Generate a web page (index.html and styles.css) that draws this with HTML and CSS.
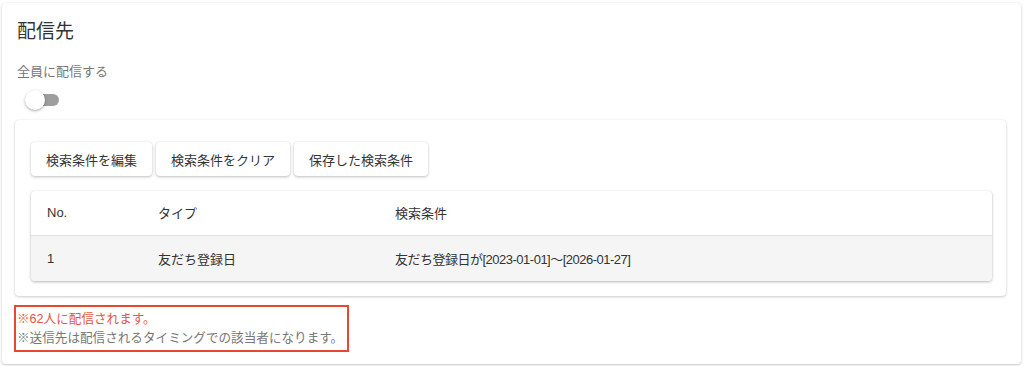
FILE: index.html
```html
<!DOCTYPE html>
<html lang="ja">
<head>
<meta charset="utf-8">
<link rel="stylesheet" href="styles.css">
</head>
<body>
<div class="card">
  <h2 class="title">配信先</h2>
  <div class="label">全員に配信する</div>
  <div class="switch"><span class="track"></span><span class="thumb"></span></div>
  <div class="inner">
    <div class="buttons">
      <button class="btn">検索条件を編集</button>
      <button class="btn">検索条件をクリア</button>
      <button class="btn">保存した検索条件</button>
    </div>
    <div class="table-card">
      <table class="table">
        <thead>
          <tr><th class="c1">No.</th><th class="c2">タイプ</th><th>検索条件</th></tr>
        </thead>
        <tbody>
          <tr><td class="c1">1</td><td class="c2">友だち登録日</td><td class="cond">友だち登録日が[2023-01-01]〜[2026-01-27]</td></tr>
        </tbody>
      </table>
    </div>
  </div>
  <div class="notes">
    <div class="note red">※62人に配信されます。</div>
    <div class="note grey">※送信先は配信されるタイミングでの該当者になります。</div>
  </div>
</div>
</body>
</html>
```

FILE: styles.css
```css
* { box-sizing: border-box; }
html, body { margin: 0; padding: 0; background: #fff; }
body {
  font-family: "Liberation Sans", "Noto Sans CJK JP", sans-serif;
  color: #333;
  padding: 3px 3px 0 2px;
  height: 366px;
  overflow: hidden;
}
.card {
  background: #fff;
  border-radius: 4px;
  box-shadow: 0 1px 3px rgba(0,0,0,0.22), 0 0 1px rgba(0,0,0,0.08);
  height: 361px;
  padding: 15px 15px 0 13px;
}
.title {
  margin: 0;
  padding-left: 2px;
  font-size: 19px;
  font-weight: 400;
  line-height: 28px;
  color: #333;
}
.label {
  margin-top: 16px;
  padding-left: 2px;
  font-size: 13px;
  line-height: 20px;
  color: #777;
}
.switch {
  position: relative;
  margin: 8px 0 0 10px;
  width: 34px;
  height: 20px;
}
.track {
  position: absolute;
  left: 2px;
  top: 4px;
  width: 32px;
  height: 12px;
  border-radius: 6px;
  background: #9e9e9e;
}
.thumb {
  position: absolute;
  left: 0;
  top: 0;
  width: 20px;
  height: 20px;
  border-radius: 50%;
  background: #fff;
  box-shadow: 0 1px 3px rgba(0,0,0,0.35);
}
.inner {
  margin-top: 10px;
  border-radius: 4px;
  box-shadow: 0 1px 3px rgba(0,0,0,0.2), 0 0 1px rgba(0,0,0,0.1);
  padding: 22px 14px 15px 16px;
}
.buttons {
  display: flex;
  gap: 4px;
}
.btn {
  font-family: "Liberation Sans", "Noto Sans CJK JP", sans-serif;
  font-size: 13px;
  color: #333;
  background: #fff;
  border: none;
  border-radius: 4px;
  height: 34px;
  padding: 0 15px;
  box-shadow: 0 1px 3px rgba(0,0,0,0.25), 0 0 1px rgba(0,0,0,0.1);
}
.table-card {
  margin-top: 15px;
  border-radius: 4px;
  overflow: hidden;
  box-shadow: 0 1px 3px rgba(0,0,0,0.28), 0 0 1px rgba(0,0,0,0.1);
}
.table {
  width: 100%;
  border-collapse: collapse;
  font-size: 13px;
  color: #333;
}
.table th, .table td {
  text-align: left;
  font-weight: 400;
  padding: 0 16px;
}
.table th { height: 44px; border-bottom: 1px solid #e2e2e2; }
.table td { height: 46px; background: #f5f5f5; }
.cond { letter-spacing: -0.5px; }
.c1 { width: 111px; }
.c2 { width: 237px; }
.notes {
  display: inline-block;
  margin: 9px 0 0 -1px;
  border: 2px solid #e9472f;
  padding: 3px 4px 2px 1px;
}
.note {
  font-size: 12.6px;
  line-height: 19px;
  white-space: nowrap;
}
.red { color: #e5553f; }
.grey { color: #777; }
```
